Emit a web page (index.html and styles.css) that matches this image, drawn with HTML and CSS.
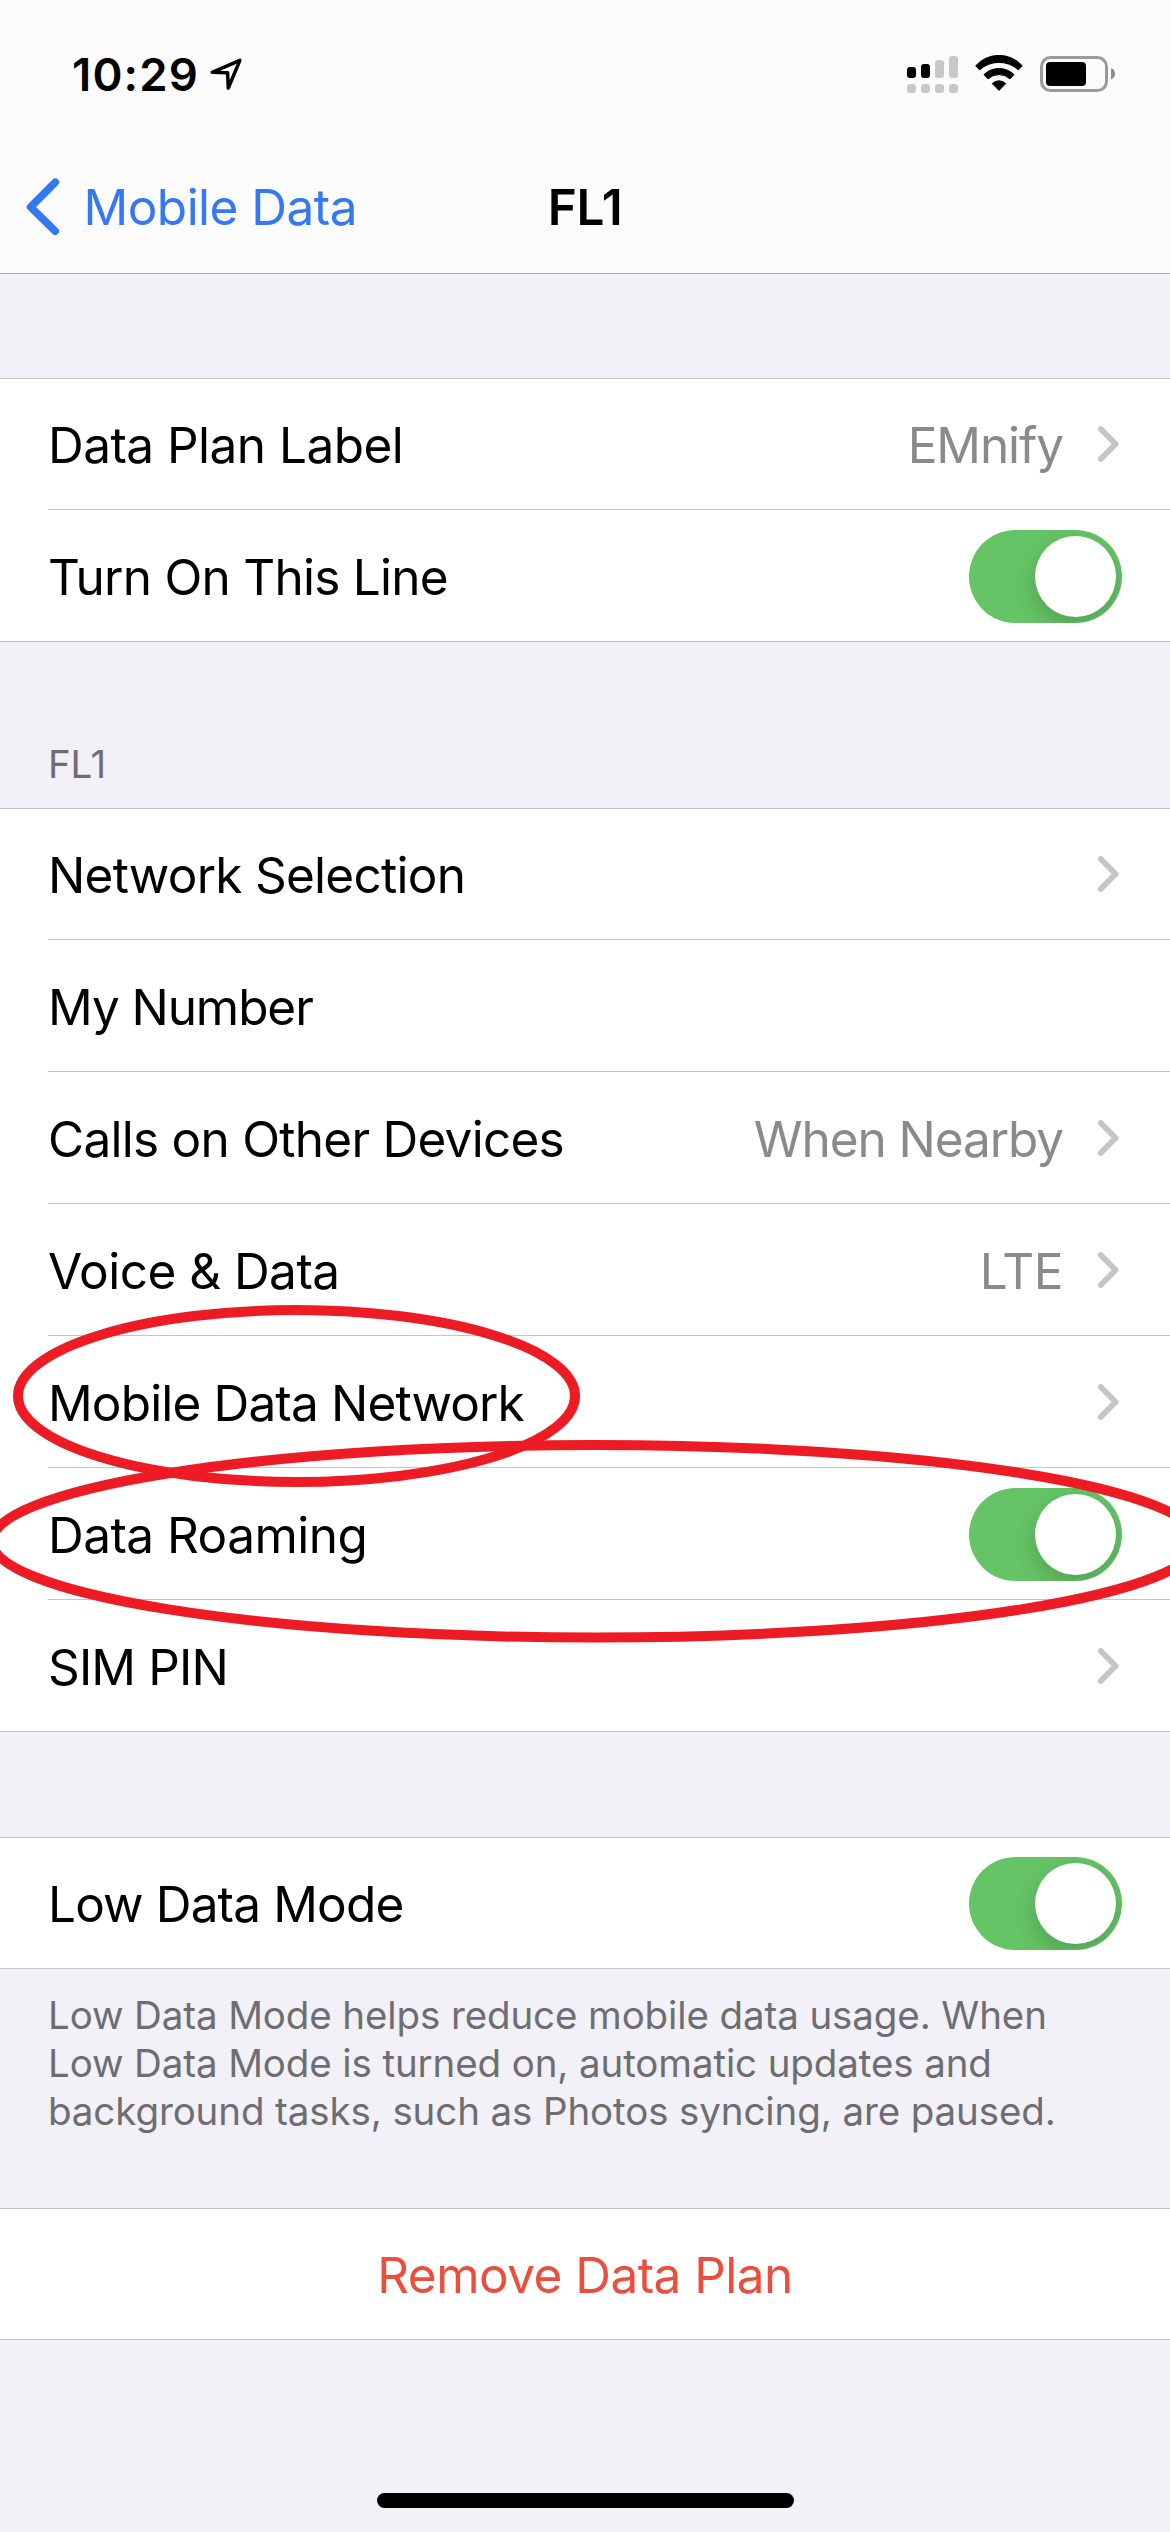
FILE: index.html
```html
<!DOCTYPE html>
<html lang="en">
<head>
<meta charset="utf-8">
<title>FL1</title>
<link rel="stylesheet" href="styles.css">
</head>
<body>
<svg class="sprite" aria-hidden="true">
  <symbol id="chevron" viewBox="0 0 24 38"><path d="M2.8 4 17.6 19 2.8 34" fill="none" stroke="currentColor" stroke-width="5.8" stroke-linecap="round" stroke-linejoin="round"/></symbol>
</svg>
<div class="screen">
  <header class="top">
    <div class="status">
      <div class="clock">
        <span class="time">10:29</span>
        <svg class="location" viewBox="0 0 34 34"><path d="M3.2 15.3 30.9 3.4 19.3 31.2 18.6 15.7Z" fill="none" stroke="#000" stroke-width="3.5" stroke-linejoin="round"/></svg>
      </div>
      <div class="indicators">
        <svg width="51" height="38" viewBox="0 0 51 38">
          <g fill="#000"><rect x="0" y="12" width="9" height="11" rx="3"/><rect x="14" y="9" width="9" height="14" rx="3"/></g>
          <g fill="#c8c8ca"><rect x="28" y="5" width="9" height="18" rx="3"/><rect x="42" y="1" width="9" height="22" rx="3"/><rect x="0" y="29" width="9" height="9" rx="3"/><rect x="14" y="29" width="9" height="9" rx="3"/><rect x="28" y="29" width="9" height="9" rx="3"/><rect x="42" y="29" width="9" height="9" rx="3"/></g>
        </svg>
        <svg width="48" height="38" viewBox="0 0 48 38">
          <g fill="#000" stroke="#000" stroke-width="1" stroke-linejoin="round">
            <path d="M.7 10.8A31.2 31.2 0 0 1 47.3 10.8L43.4 14.9A28.8 28.8 0 0 0 4.6 14.9Z"/>
            <path d="M9 19.6A21.5 21.5 0 0 1 39 19.6L35 23.9A16.2 16.2 0 0 0 13 23.9Z"/>
            <path d="M17.3 28.6A9.5 9.5 0 0 1 30.7 28.6L24 35.4Z"/>
          </g>
        </svg>
        <svg width="75" height="38" viewBox="0 0 75 38">
          <rect x="1.5" y="2.5" width="65" height="33" rx="9" fill="none" stroke="#9b9b9b" stroke-width="3"/>
          <rect x="6" y="7" width="40" height="24" rx="4" fill="#000"/>
          <path d="M71 13.2Q75 14.6 75 18.8T71 24.4Z" fill="#8c8c8c"/>
        </svg>
      </div>
    </div>
    <nav class="nav">
      <div class="back">
        <svg class="back-icon" viewBox="0 0 34 58"><path d="M29.3 4.2 4.6 29 29.3 53.2" fill="none" stroke="currentColor" stroke-width="7.6" stroke-linecap="round" stroke-linejoin="round"/></svg>
        <span>Mobile Data</span>
      </div>
      <h1 class="title">FL1</h1>
    </nav>
  </header>
  <main>
    <section class="group group-first">
      <div class="row"><span class="label loose">Data Plan Label</span><span class="value tight">EMnify</span><svg class="chevron"><use href="#chevron"/></svg></div>
      <div class="row"><span class="label">Turn On This Line</span><span class="toggle"></span></div>
    </section>
    <h2 class="caption">FL1</h2>
    <section class="group">
      <div class="row"><span class="label">Network Selection</span><svg class="chevron"><use href="#chevron"/></svg></div>
      <div class="row"><span class="label tight">My Number</span></div>
      <div class="row"><span class="label">Calls on Other Devices</span><span class="value tight">When Nearby</span><svg class="chevron"><use href="#chevron"/></svg></div>
      <div class="row"><span class="label loose">Voice &amp; Data</span><span class="value loose">LTE</span><svg class="chevron"><use href="#chevron"/></svg></div>
      <div class="row"><span class="label snug">Mobile Data Network</span><svg class="chevron"><use href="#chevron"/></svg></div>
      <div class="row"><span class="label loose">Data Roaming</span><span class="toggle"></span></div>
      <div class="row"><span class="label snug">SIM PIN</span><svg class="chevron"><use href="#chevron"/></svg></div>
    </section>
    <section class="group group-mode">
      <div class="row"><span class="label snug">Low Data Mode</span><span class="toggle"></span></div>
    </section>
    <p class="note">Low Data Mode helps reduce mobile data usage. When<br>Low Data Mode is turned on, automatic updates and<br>background tasks, such as Photos syncing, are paused.</p>
    <section class="group">
      <div class="row row-action"><span class="label loose remove">Remove Data Plan</span></div>
    </section>
  </main>
  <div class="home-indicator"></div>
  <svg class="marks" viewBox="0 0 1170 2532">
    <g fill="none" stroke="#ed1c24" stroke-width="10">
      <ellipse cx="296.5" cy="1396" rx="278.5" ry="86"/>
      <ellipse cx="595" cy="1541.3" rx="603" ry="96.3"/>
    </g>
  </svg>
</div>
</body>
</html>
```
FILE: styles.css
```css
* { box-sizing: border-box; }

body {
  margin: 0;
  background: #f2f1f7;
  color: #000;
  font-family: Inter, "Liberation Sans", sans-serif;
  font-size: 49.5px;
  line-height: 60px;
}

svg { display: block; flex: none; }

.sprite { position: absolute; width: 0; height: 0; }

.screen {
  position: relative;
  display: flex;
  flex-direction: column;
  width: 1170px;
  height: 2532px;
  overflow: hidden;
}

/* Status bar and navigation */
.top {
  height: 274px;
  background: #fbfbfc;
  border-bottom: 1px solid #a9a9ad;
}

.status {
  display: flex;
  align-items: center;
  justify-content: space-between;
  height: 132px;
  padding: 16px 55px 0 72px;
}

.clock { display: flex; align-items: center; gap: 10px; }

.time {
  padding-top: 1px;
  font-size: 45.5px;
  font-weight: 600;
  letter-spacing: 1.15px;
}

.location { width: 34px; height: 34px; }

.indicators { display: flex; gap: 17px; }

.nav {
  display: grid;
  grid-template-columns: 1fr auto 1fr;
  align-items: center;
  height: 141px;
  padding-top: 9px;
}

.back {
  display: flex;
  align-items: center;
  gap: 23.5px;
  padding-left: 26px;
  color: #3478f6;
  letter-spacing: -.52px;
}

.back-icon { width: 34px; height: 58px; }

.title {
  margin: 0;
  font-size: 49.5px;
  font-weight: 600;
  letter-spacing: -.5px;
}

/* Setting groups */
.group {
  background: #fff;
  border: solid #c6c6c8;
  border-width: 1px 0;
}

.group-first { margin-top: 104px; }
.group-mode { margin-top: 105px; }

.row {
  display: flex;
  align-items: center;
  height: 130px;
  margin-left: 48px;
  padding-right: 48px;
}

.row + .row { height: 132px; border-top: 1px solid #c6c6c8; }

.label { flex: 1; padding-top: 2px; letter-spacing: -.74px; }

.value {
  padding-top: 2px;
  margin-right: 35px;
  color: #8a8a8d;
}

.tight { letter-spacing: -1.08px; }
.snug { letter-spacing: -.85px; }
.loose { letter-spacing: -.53px; }

.chevron { width: 24px; height: 38px; color: #c5c5c7; }

.toggle {
  display: flex;
  justify-content: flex-end;
  width: 153px;
  height: 93px;
  margin-top: 1px;
  padding: 6px;
  overflow: hidden;
  border-radius: 47px;
  background: #65c466;
}

.toggle::before {
  content: "";
  width: 81px;
  height: 81px;
  border-radius: 50%;
  background: #fff;
  box-shadow: 0 9px 24px rgba(0, 0, 0, .18);
}

.caption {
  margin: 0;
  padding: 98px 48px 20px;
  color: #6d6d72;
  font-size: 38.5px;
  font-weight: 400;
  line-height: 48px;
  letter-spacing: -.12px;
}

.note {
  margin: 0;
  padding: 22px 48px 73px;
  color: #6d6d72;
  font-size: 38.5px;
  line-height: 48px;
  letter-spacing: -.11px;
}

.row-action { margin: 0; padding: 0; }
.remove { color: #eb4e3d; text-align: center; }

.home-indicator {
  width: 417px;
  height: 15px;
  margin: auto auto 24px;
  border-radius: 8px;
  background: #000;
}

/* Hand-drawn style highlights over the list */
.marks {
  position: absolute;
  inset: 0;
  width: 1170px;
  height: 2532px;
  pointer-events: none;
}
```
